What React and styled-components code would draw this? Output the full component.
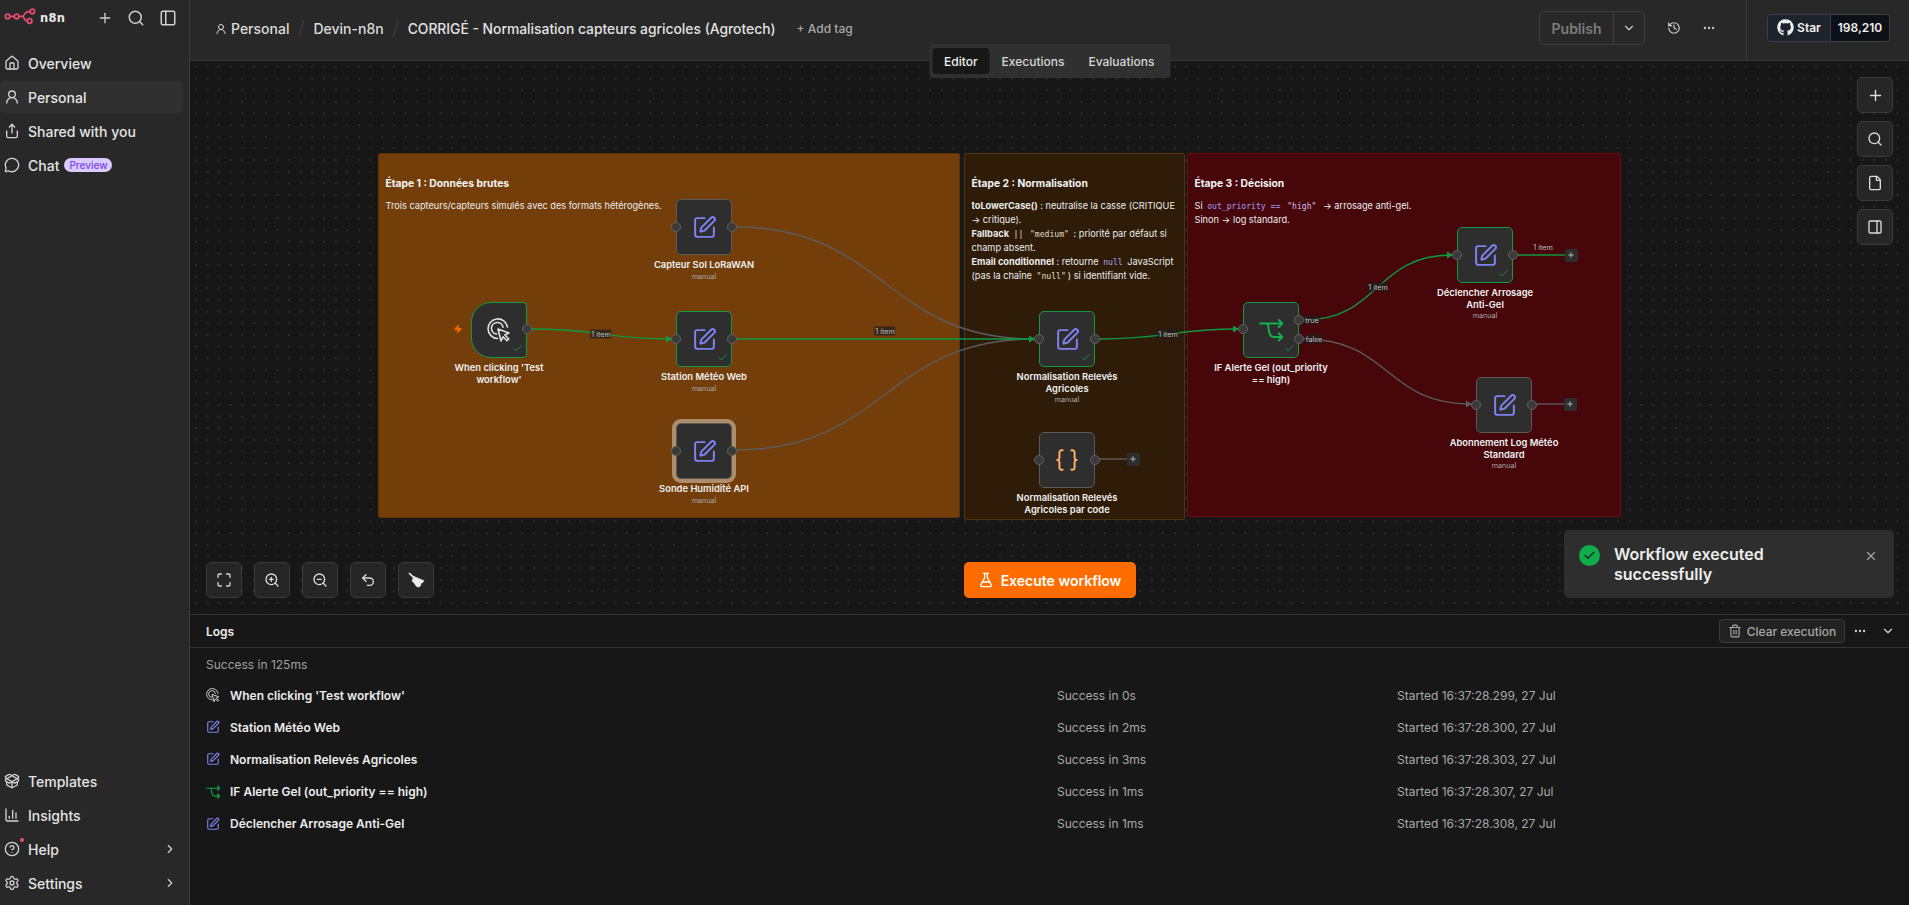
import React from 'react';
import styled, { createGlobalStyle } from 'styled-components';
import {
  House, UserRound, Share, MessageCircle, PackageOpen, ChartColumn, CircleHelp, Settings, ChevronRight,
  Plus, Search, PanelLeft, PanelRight, History, Ellipsis, ChevronDown, Maximize, ZoomIn, ZoomOut, Undo2,
  FlaskConical, Trash2, X, Check, File, SquarePen, Braces, Zap,
} from 'lucide-react';
import { FaGithub } from 'react-icons/fa';

const OX = 190;
const OY = 61;

const Global = createGlobalStyle`
  * { box-sizing: border-box; }
  html, body { margin: 0; height: 100%; background: #171717; overflow: hidden; }
  body { font-family: Inter, "Liberation Sans", sans-serif; color: #e6e6e6; }
`;

const Shell = styled.div`
  width: 1909px; height: 905px; display: grid; grid-template-columns: 190px 1fr; position: relative; overflow: hidden;
`;

/* ---------- sidebar ---------- */
const Sidebar = styled.aside`
  background: #282828; border-right: 1px solid #3b3b3b; display: flex; flex-direction: column; padding-bottom: 6px;
`;
const BrandRow = styled.div`
  height: 47px; flex: none; display: flex; align-items: center; padding: 0 0 11px 4px; color: #d8d8d8;
`;
const BrandName = styled.span`
  font-family: "DejaVu Sans", sans-serif; font-weight: 700; font-size: 11.5px; letter-spacing: .3px; margin-left: 4px; color: #e8e8e8; flex: 1;
`;
const BrandActions = styled.div`
  display: flex; align-items: center; gap: 14px; padding-right: 12px; color: #cfcfcf;
`;
const Nav = styled.nav`
  display: flex; flex-direction: column; gap: 2px;
`;
const Spacer = styled.div`flex: 1;`;
const NavItem = styled.div`
  height: 32px; width: 183px; display: flex; align-items: center; gap: 8px; padding: 0 6px 0 4px; border-radius: 4px;
  font-size: 14px; font-weight: 500; color: #e4e4e4; position: relative;
  background: ${p => (p.$active ? '#303030' : 'transparent')};
  svg { flex: none; color: #d2d2d2; }
`;
const NavLabel = styled.span`flex: ${p => (p.$grow ? 1 : 'none')};`;
const PreviewBadge = styled.span`
  font-size: 10px; line-height: 14px; padding: 0 5px; border-radius: 8px; background: #d9cbff; color: #7a45f0; margin-left: -3px; font-weight: 500;
`;
const AlertDot = styled.span`
  position: absolute; left: 20px; top: 5px; width: 4px; height: 4px; border-radius: 50%; background: #f4525c;
`;

/* ---------- main ---------- */
const Main = styled.main`
  display: flex; flex-direction: column; min-width: 0; position: relative;
`;
const Header = styled.header`
  height: 61px; background: #282828; border-bottom: 1px solid #393939; display: flex; align-items: stretch; flex: none;
`;
const Crumbs = styled.div`
  flex: 1; display: flex; align-items: center; padding: 0 0 3px 25px; font-size: 14px; font-weight: 500; color: #dcdcdc;
`;
const Crumb = styled.span`display: inline-flex; align-items: center; gap: 4px;`;
const CrumbTitle = styled.span`font-size: 13.85px; color: #e2e2e2;`;
const CrumbSep = styled.span`
  width: 1px; height: 18px; background: #3f3f3f; transform: rotate(14deg); margin: 0 ${p => p.$gap}px;
`;
const AddTag = styled.span`
  font-size: 12px; color: #a8a8a8; margin-left: 21px;
`;
const HeadActions = styled.div`
  display: flex; align-items: center; padding-bottom: 4px; color: #cfcfcf;
`;
const PublishGroup = styled.div`
  width: 106px; height: 34px; border: 1px solid #3f3f3f; border-radius: 5px; display: grid; grid-template-columns: 74px 1fr;
  font-size: 14px; font-weight: 600; color: #7c7c7c; margin-right: 22px;
`;
const PublishText = styled.span`display: flex; align-items: center; justify-content: center; border-right: 1px solid #3f3f3f;`;
const PublishMore = styled.span`display: flex; align-items: center; justify-content: center; color: #cfcfcf;`;
const HeadIcon = styled.span`display: flex; margin-right: ${p => p.$mr}px;`;
const GithubWrap = styled.div`
  width: 163px; border-left: 1px solid #393939; display: flex; align-items: center; padding: 0 0 5px 20px;
`;
const GithubBtn = styled.div`
  width: 123px; height: 28px; display: grid; grid-template-columns: 63px 1fr; border: 1px solid #3a4048; border-radius: 4px; overflow: hidden; font-size: 12px; font-weight: 600; color: #f0f0f0;
`;
const GithubStar = styled.span`display: flex; align-items: center; justify-content: center; gap: 3px; background: #1d242c; border-right: 1px solid #3a4048;`;
const GithubCount = styled.span`display: flex; align-items: center; justify-content: center; background: #0d1117;`;

const Tabs = styled.div`
  position: absolute; left: 50%; top: 44px; transform: translateX(-50%); z-index: 4; width: 241px; height: 34px; background: #303030; border-radius: 4px;
  display: flex; align-items: center; padding: 0 3px; font-size: 12px; font-weight: 500; color: #d6d6d6;
`;
const Tab = styled.span`
  height: 26px; display: flex; align-items: center; padding: 0 12px; border-radius: 4px;
  background: ${p => (p.$active ? '#171717' : 'transparent')}; color: ${p => (p.$active ? '#f2f2f2' : '#d6d6d6')};
`;

/* ---------- canvas ---------- */
const Canvas = styled.section`
  flex: 1; position: relative; overflow: hidden; background-color: #171717;
  background-image: radial-gradient(circle, #2c2c2c .8px, transparent 1px);
  background-size: 11.67px 11.67px;
`;
const Sticky = styled.div`
  position: absolute; left: ${p => p.$x - OX}px; top: ${p => p.$y - OY}px; width: ${p => p.$w}px; height: ${p => p.$h}px;
  background: ${p => p.$bg}; border: 1px solid ${p => p.$line}; border-radius: 2px; padding: 22px 6.5px 0;
  font-size: 9.2px; line-height: 14px; color: #ececec;
  b { font-weight: 700; }
`;
const StickyTitle = styled.div`font-size: 10.3px; font-weight: 700; margin-bottom: 9px; color: #f4f4f4; line-height: 14px;`;
const InlineCode = styled.code`
  font-family: "DejaVu Sans Mono", "Liberation Mono", monospace; font-size: 8.1px; padding: 0 2px; color: ${p => p.$c || '#e6dcc6'};
`;
const Wires = styled.svg`position: absolute; inset: 0; width: 100%; height: 100%; z-index: 1; pointer-events: none;`;
const NodeWrap = styled.div`
  position: absolute; z-index: 2; left: ${p => p.$x - OX}px; top: ${p => p.$y - OY}px; width: 56px; height: 56px;
`;
const NodeBox = styled.div`
  width: 100%; height: 100%; background: #2e2e2e; display: flex; align-items: center; justify-content: center;
  border: ${p => (p.$ok ? '1.5px solid #129a45' : '1.2px solid #5d5a55')};
  border-radius: ${p => (p.$trigger ? '20px 4px 4px 20px' : '5px')};
  box-shadow: ${p => (p.$halo ? '0 0 0 4px #ad8d6c' : 'none')};
`;
const Port = styled.span`
  position: absolute; z-index: 3; width: 10px; height: 10px; border-radius: 50%; background: #3a3a3a; border: 1px solid #626262;
  top: ${p => p.$top - 5}px; ${p => (p.$in ? 'left: -5px' : 'right: -5px')};
`;
const NodeCheck = styled.span`
  position: absolute; right: 4px; bottom: 4px; display: flex; color: #129a45;
`;
const NodeCaption = styled.div`
  position: absolute; top: 60px; left: 50%; transform: translateX(-50%); width: 118px; text-align: center;
  font-size: 9.4px; line-height: 11.5px; font-weight: 600; color: #f0f0f0;
`;
const NodeSub = styled.div`
  font-size: 7.2px; line-height: 12px; font-weight: 400; color: #a9a9a9;
`;
const TriggerBolt = styled.span`
  position: absolute; left: -18px; top: 22px; display: flex; color: #ff6d00;
`;
const EdgeTag = styled.span`
  position: absolute; z-index: 2; left: ${p => p.$x - OX}px; top: ${p => p.$y - OY}px; transform: translate(-50%, -50%);
  font-size: 7.2px; line-height: 9px; padding: 0 1px; background: ${p => p.$bg || 'rgba(30,30,30,.72)'}; color: #bdbdbd; white-space: nowrap;
`;
const PlusBox = styled.span`
  position: absolute; z-index: 2; left: ${p => p.$x - OX - 6.5}px; top: ${p => p.$y - OY - 6.5}px; width: 13px; height: 13px; background: #2e2e2e; border-radius: 2px;
  display: flex; align-items: center; justify-content: center; color: #cfcfcf;
`;
const SideTools = styled.div`
  position: absolute; z-index: 3; right: 16px; top: 16px; display: flex; flex-direction: column; gap: 8px;
`;
const ToolBtn = styled.button`
  width: 36px; height: 36px; border: 1px solid #3a3a3a; border-radius: 5px; background: #262626; color: #dcdcdc; padding: 0;
  display: flex; align-items: center; justify-content: center;
`;
const BottomTools = styled.div`
  position: absolute; z-index: 3; left: 16px; top: 501px; display: flex; gap: 12px;
`;
const Execute = styled.button`
  position: absolute; z-index: 3; left: 50%; top: 501px; transform: translateX(-50%); width: 172px; height: 36px; border: 0; border-radius: 5px;
  background: #ff6d00; color: #fff; font: 600 14px Inter, sans-serif; display: flex; align-items: center; justify-content: center; gap: 7px;
`;
const Toast = styled.div`
  position: absolute; z-index: 6; left: 1564px; top: 530px; width: 330px; height: 68px; background: #2e2e2e; border-radius: 5px;
  display: grid; grid-template-columns: 21px 1fr 14px; column-gap: 14px; padding: 15px 16px 0 15px;
`;
const ToastCheck = styled.span`
  width: 21px; height: 21px; border-radius: 50%; background: #0cad4a; display: flex; align-items: center; justify-content: center; color: #1f2a23;
`;
const ToastText = styled.div`font-size: 16px; line-height: 20px; font-weight: 600; color: #ededed; margin-top: -1px;`;
const ToastClose = styled.span`color: #a8a8a8; display: flex; padding-top: 4px;`;

/* ---------- logs ---------- */
const Logs = styled.section`
  height: 291px; flex: none; background: #171717; border-top: 1px solid #333; display: flex; flex-direction: column;
`;
const LogsHead = styled.div`
  height: 33px; flex: none; border-bottom: 1px solid #333; display: flex; align-items: center; padding: 0 14px 0 16px;
  font-size: 12px; font-weight: 600; color: #ececec;
`;
const LogsTitle = styled.span`flex: 1;`;
const ClearBtn = styled.button`
  width: 126px; height: 24px; border: 1px solid #3a3a3a; border-radius: 4px; background: #222; color: #a8a8a8; padding: 0; margin-right: 8px;
  font: 500 12px Inter, sans-serif; display: flex; align-items: center; justify-content: center; gap: 5px;
`;
const LogsIcon = styled.span`display: flex; color: #d8d8d8; margin-left: ${p => p.$ml || 0}px;`;
const LogsSummary = styled.div`
  font-size: 12px; line-height: 16px; color: #a0a0a0; padding: 9px 16px 0; height: 31px; flex: none;
`;
const LogRows = styled.div`display: flex; flex-direction: column; padding: 0 0 0 16px;`;
const LogRow = styled.div`
  height: 32.2px; display: grid; grid-template-columns: 851px 340px 1fr; align-items: center; font-size: 12px; color: #a8a8a8;
`;
const LogName = styled.span`
  display: flex; align-items: center; gap: 10px; font-weight: 600; color: #ececec;
  svg { flex: none; }
`;

/* ---------- drawings ---------- */
const Logo = () => (
  <svg width="32" height="20" viewBox="0 0 32 20" fill="none" stroke="#ea4b71" strokeWidth="1.7">
    <circle cx="3.6" cy="8.4" r="2.3" /><circle cx="12.6" cy="8.4" r="2.3" />
    <circle cx="25.6" cy="13" r="2.3" /><circle cx="28.3" cy="3.4" r="2.3" />
    <path d="M6 8.4h4.2M15 8.4h3.4c2.2 0 1.2 4.6 4.8 4.6M18.4 8.4c2.6 0 .8-5 7.5-5" />
  </svg>
);
const ClickIcon = ({ size = 24, color = '#e0e0e0' }) => (
  <svg width={size} height={size} viewBox="0 0 24 24" fill="none" stroke={color} strokeWidth="1.6" strokeLinejoin="round" strokeLinecap="round">
    <path d="M10.5 20.5A9.8 9.8 0 1 1 20.5 9" />
    <path d="M9.7 16A5.8 5.8 0 1 1 16 9.2" />
    <path d="M11 11l11 4-4.2 2 4 4-1.8 1.8-4-4-2 4.2z" fill="#2e2e2e" />
  </svg>
);
const IfIcon = ({ size = 24, color = '#10b04f' }) => (
  <svg width={size} height={size} viewBox="0 0 24 24" fill="none" stroke={color} strokeWidth="2" strokeLinejoin="round" strokeLinecap="round">
    <path d="M1 5.5h22.4M19.8 2l3.6 3.5L19.8 9" />
    <path d="M7.8 5.5c1.6 0 1.4 2 2 6.5.6 5 2 7 5 7h8.6M19.8 15.5l3.6 3.5-3.6 3.5" />
  </svg>
);
const Broom = () => (
  <svg width="17" height="17" viewBox="0 0 17 17" fill="#ececec" stroke="#ececec" strokeLinejoin="round">
    <path d="M1 1l4.6 4.4" strokeWidth="1.7" fill="none" />
    <path d="M5.7 4.3L16 8.7l-1.6 2.2-1.4.2-.2 2.4-2 1.8-1.4-.6-1.2-.4-2.2-3.6L4 9.3z" strokeWidth=".5" />
  </svg>
);

const EditGlyph = ({ size = 25 }) => <SquarePen size={size} color="#7e81f0" strokeWidth={1.9} />;

const nodes = [
  { id: 'a', x: 676, y: 199, name: 'Capteur Sol LoRaWAN', sub: true },
  { id: 'b', x: 676, y: 311, name: 'Station Météo Web', sub: true, ok: true },
  { id: 'c', x: 676, y: 423, name: 'Sonde Humidité API', sub: true, halo: true },
  { id: 'd', x: 471, y: 302, name: "When clicking 'Test workflow'", kind: 'trigger', ok: true, noIn: true },
  { id: 'e', x: 1039, y: 311, name: 'Normalisation Relevés Agricoles', sub: true, ok: true },
  { id: 'f', x: 1039, y: 432, name: 'Normalisation Relevés Agricoles par code', kind: 'code' },
  { id: 'g', x: 1243, y: 302, name: 'IF Alerte Gel (out_priority == high)', kind: 'if', ok: true },
  { id: 'h', x: 1457, y: 227, name: 'Déclencher Arrosage Anti-Gel', sub: true, ok: true },
  { id: 'i', x: 1476, y: 377, name: 'Abonnement Log Météo Standard', sub: true },
];

const GREEN = '#0f9a42';
const GREY = '#5c5c5c';
const edges = [
  { d: 'M736 227C885 227 885 339 1034 339', c: GREY },
  { d: 'M736 450C885 450 885 339 1034 339', c: GREY },
  { d: 'M531 329C600 329 605 339 671 339', c: GREEN },
  { d: 'M736 339H1034', c: GREEN },
  { d: 'M1099 339C1170 339 1170 329 1238 329', c: GREEN },
  { d: 'M1304 320C1380 320 1374 255 1452 255', c: GREEN },
  { d: 'M1304 339C1390 339 1385 404 1471 404', c: GREY },
  { d: 'M1518 255H1565', c: GREEN },
  { d: 'M1537 404H1564', c: GREY },
  { d: 'M1099 459H1127', c: GREY },
];
const arrows = [
  [671, 339, GREEN], [1034, 339, GREEN], [1238, 329, GREEN], [1452, 255, GREEN], [1471, 404, GREY],
];

const NodeCard = ({ n }) => (
  <NodeWrap $x={n.x} $y={n.y}>
    <NodeBox $ok={n.ok} $trigger={n.kind === 'trigger'} $halo={n.halo}>
      {n.kind === 'trigger' ? <ClickIcon /> : n.kind === 'if' ? <IfIcon /> : n.kind === 'code' ? <Braces size={26} color="#ffb066" strokeWidth={1.8} /> : <EditGlyph />}
    </NodeBox>
    {n.kind === 'trigger' && <TriggerBolt><Zap size={10} fill="#ff6d00" strokeWidth={1} /></TriggerBolt>}
    {!n.noIn && <Port $in $top={n.kind === 'if' ? 27 : 28} />}
    {n.kind === 'if' ? (<><Port $top={18} /><Port $top={37} /></>) : <Port $top={n.kind === 'trigger' ? 27 : 28} />}
    {n.ok && <NodeCheck><Check size={11} strokeWidth={2} /></NodeCheck>}
    <NodeCaption>
      {n.name}
      {n.sub && <NodeSub>manual</NodeSub>}
    </NodeCaption>
  </NodeWrap>
);

const logRows = [
  [<ClickIcon size={14} color="#d8d8d8" />, "When clicking 'Test workflow'", 'Success in 0s', 'Started 16:37:28.299, 27 Jul'],
  [<SquarePen size={14} color="#7e81f0" />, 'Station Météo Web', 'Success in 2ms', 'Started 16:37:28.300, 27 Jul'],
  [<SquarePen size={14} color="#7e81f0" />, 'Normalisation Relevés Agricoles', 'Success in 3ms', 'Started 16:37:28.303, 27 Jul'],
  [<IfIcon size={14} color="#10a34a" />, 'IF Alerte Gel (out_priority == high)', 'Success in 1ms', 'Started 16:37:28.307, 27 Jul'],
  [<SquarePen size={14} color="#7e81f0" />, 'Déclencher Arrosage Anti-Gel', 'Success in 1ms', 'Started 16:37:28.308, 27 Jul'],
];

export default function App() {
  return (
    <Shell>
      <Global />
      <Sidebar>
        <BrandRow>
          <Logo />
          <BrandName>n8n</BrandName>
          <BrandActions>
            <Plus size={16} />
            <Search size={18} />
            <PanelLeft size={18} />
          </BrandActions>
        </BrandRow>
        <Nav>
          <NavItem><House size={16} /><NavLabel>Overview</NavLabel></NavItem>
          <NavItem $active><UserRound size={16} /><NavLabel>Personal</NavLabel></NavItem>
          <NavItem><Share size={16} /><NavLabel>Shared with you</NavLabel></NavItem>
          <NavItem><MessageCircle size={16} /><NavLabel>Chat</NavLabel><PreviewBadge>Preview</PreviewBadge></NavItem>
        </Nav>
        <Spacer />
        <Nav>
          <NavItem><PackageOpen size={16} /><NavLabel>Templates</NavLabel></NavItem>
          <NavItem><ChartColumn size={16} /><NavLabel>Insights</NavLabel></NavItem>
          <NavItem><CircleHelp size={16} /><AlertDot /><NavLabel $grow>Help</NavLabel><ChevronRight size={14} /></NavItem>
          <NavItem><Settings size={16} /><NavLabel $grow>Settings</NavLabel><ChevronRight size={14} /></NavItem>
        </Nav>
      </Sidebar>

      <Main>
        <Header>
          <Crumbs>
            <Crumb><UserRound size={12} />Personal</Crumb>
            <CrumbSep $gap={11.5} />
            <Crumb>Devin-n8n</Crumb>
            <CrumbSep $gap={11.5} />
            <CrumbTitle>CORRIGÉ - Normalisation capteurs agricoles (Agrotech)</CrumbTitle>
            <AddTag>+ Add tag</AddTag>
          </Crumbs>
          <HeadActions>
            <PublishGroup>
              <PublishText>Publish</PublishText>
              <PublishMore><ChevronDown size={14} /></PublishMore>
            </PublishGroup>
            <HeadIcon $mr={21}><History size={14} /></HeadIcon>
            <HeadIcon $mr={30}><Ellipsis size={14} /></HeadIcon>
          </HeadActions>
          <GithubWrap>
            <GithubBtn>
              <GithubStar><FaGithub size={17} />Star</GithubStar>
              <GithubCount>198,210</GithubCount>
            </GithubBtn>
          </GithubWrap>
        </Header>
        <Tabs>
          <Tab $active>Editor</Tab>
          <Tab>Executions</Tab>
          <Tab>Evaluations</Tab>
        </Tabs>

        <Canvas>
          <Sticky $x={378} $y={153} $w={582} $h={365} $bg="#743e0a" $line="#5e3208">
            <StickyTitle>Étape 1 : Données brutes</StickyTitle>
            Trois capteurs/capteurs simulés avec des formats hétérogènes.
          </Sticky>
          <Sticky $x={964} $y={153} $w={221} $h={367} $bg="#2e1c08" $line="#4e3511">
            <StickyTitle>Étape 2 : Normalisation</StickyTitle>
            <b>toLowerCase()</b> : neutralise la casse (CRITIQUE → critique).<br />
            <b>Fallback</b> <InlineCode>||</InlineCode> <InlineCode>"medium"</InlineCode> : priorité par défaut si champ absent.<br />
            <b>Email conditionnel</b> : retourne <InlineCode $c="#a6a6f2">null</InlineCode> JavaScript (pas la chaîne <InlineCode>"null"</InlineCode>) si identifiant vide.
          </Sticky>
          <Sticky $x={1187} $y={153} $w={434} $h={364} $bg="#46060a" $line="#6b0e13">
            <StickyTitle>Étape 3 : Décision</StickyTitle>
            Si <InlineCode $c="#a49cf2">out_priority == <InlineCode $c="#d2bff2">"high"</InlineCode></InlineCode> → arrosage anti-gel.<br />
            Sinon → log standard.
          </Sticky>

          <Wires viewBox={`${OX} ${OY} 1719 553`} preserveAspectRatio="xMinYMin">
            {edges.map(e => <path key={e.d} d={e.d} fill="none" stroke={e.c} strokeWidth="1.4" />)}
            {arrows.map(([x, y, c]) => <path key={`${x}-${y}`} d={`M${x - 5} ${y - 3.5}L${x + 1} ${y}L${x - 5} ${y + 3.5}z`} fill={c} />)}
          </Wires>

          {nodes.map(n => <NodeCard key={n.id} n={n} />)}

          <EdgeTag $x={601} $y={334}>1 item</EdgeTag>
          <EdgeTag $x={885} $y={331}>1 item</EdgeTag>
          <EdgeTag $x={1168} $y={334}>1 item</EdgeTag>
          <EdgeTag $x={1378} $y={287}>1 item</EdgeTag>
          <EdgeTag $x={1543} $y={247} $bg="transparent">1 item</EdgeTag>
          <EdgeTag $x={1312} $y={320}>true</EdgeTag>
          <EdgeTag $x={1314} $y={339}>false</EdgeTag>
          <PlusBox $x={1571} $y={255}><Plus size={8} strokeWidth={2.4} /></PlusBox>
          <PlusBox $x={1570} $y={404}><Plus size={8} strokeWidth={2.4} /></PlusBox>
          <PlusBox $x={1133} $y={459}><Plus size={8} strokeWidth={2.4} /></PlusBox>

          <SideTools>
            <ToolBtn><Plus size={17} /></ToolBtn>
            <ToolBtn><Search size={16} /></ToolBtn>
            <ToolBtn><File size={16} /></ToolBtn>
            <ToolBtn><PanelRight size={16} /></ToolBtn>
          </SideTools>
          <BottomTools>
            <ToolBtn><Maximize size={16} /></ToolBtn>
            <ToolBtn><ZoomIn size={16} /></ToolBtn>
            <ToolBtn><ZoomOut size={16} /></ToolBtn>
            <ToolBtn><Undo2 size={16} /></ToolBtn>
            <ToolBtn><Broom /></ToolBtn>
          </BottomTools>
          <Execute><FlaskConical size={16} />Execute workflow</Execute>
        </Canvas>

        <Logs>
          <LogsHead>
            <LogsTitle>Logs</LogsTitle>
            <ClearBtn><Trash2 size={14} />Clear execution</ClearBtn>
            <LogsIcon><Ellipsis size={14} /></LogsIcon>
            <LogsIcon $ml={14}><ChevronDown size={14} /></LogsIcon>
          </LogsHead>
          <LogsSummary>Success in 125ms</LogsSummary>
          <LogRows>
            {logRows.map(([icon, name, st, at]) => (
              <LogRow key={name}>
                <LogName>{icon}{name}</LogName>
                <span>{st}</span>
                <span>{at}</span>
              </LogRow>
            ))}
          </LogRows>
        </Logs>
      </Main>

      <Toast>
        <ToastCheck><Check size={13} strokeWidth={3} /></ToastCheck>
        <ToastText>Workflow executed successfully</ToastText>
        <ToastClose><X size={14} /></ToastClose>
      </Toast>
    </Shell>
  );
}
